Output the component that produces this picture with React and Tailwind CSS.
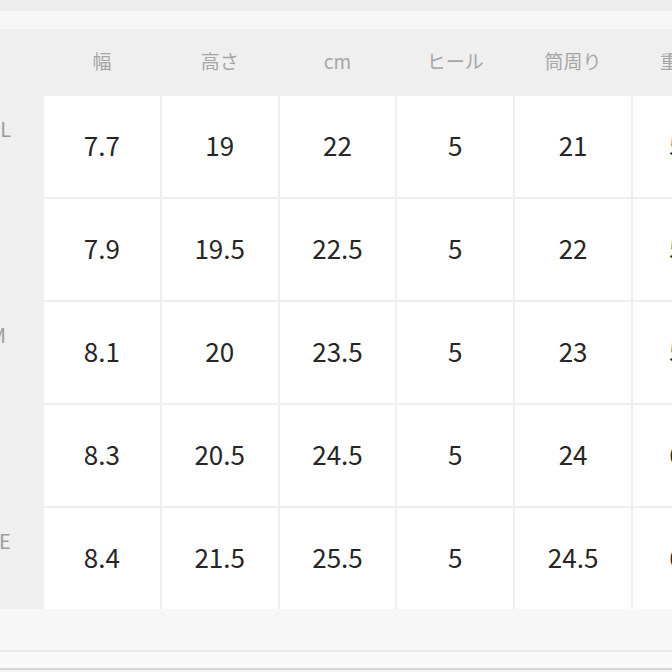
import React from "react";

const headers = ["幅", "高さ", "cm", "ヒール", "筒周り", "重さ(g)"];
const rows = [
  { label: "SMALL", sub: "22cm", v: ["7.7", "19", "22", "5", "21", "530"] },
  { label: "S/M", sub: "22.5", v: ["7.9", "19.5", "22.5", "5", "22", "550"] },
  { label: "SM/M", sub: "23.5", v: ["8.1", "20", "23.5", "5", "23", "580"] },
  { label: "M/L", sub: "24.5", v: ["8.3", "20.5", "24.5", "5", "24", "610"] },
  { label: "LARGE", sub: "25.5", v: ["8.4", "21.5", "25.5", "5", "24.5", "640"] },
];

const font = { fontFamily: '"Noto Sans CJK JP", "Noto Sans", sans-serif' };

export default function App() {
  return (
    <div
      className="w-[672px] h-[672px] overflow-hidden bg-[#f7f7f7] flex flex-col"
      style={font}
    >
      <div className="h-[11px] shrink-0 bg-[#eeeeee]" />
      <div className="h-[18px] shrink-0 bg-[#f7f7f7]" />
      <div className="ml-[-82px] w-max shrink-0 grid grid-cols-[124px_repeat(6,115.8px)] gap-[2px] bg-[#efefef]">
        <div className="h-[65px] bg-[#efefef]" />
        {headers.map((h) => (
          <div
            key={h}
            className="h-[65px] bg-[#efefef] flex items-center justify-center text-[19px] text-[#a6a6a6]"
          >
            {h}
          </div>
        ))}
        {rows.map((r) => (
          <React.Fragment key={r.label}>
            <div className="h-[101px] bg-[#efefef] flex flex-col items-center justify-center text-[#9c9c9c] leading-[26px] pb-[10px]">
              <span className="text-[20px]">{r.label}</span>
              <span className="text-[14px]">{r.sub}</span>
            </div>
            {r.v.map((x, i) => (
              <div
                key={i}
                className="h-[101px] bg-white flex items-center justify-center text-[26px] text-[#262626] pb-[5px]"
              >
                {x}
              </div>
            ))}
          </React.Fragment>
        ))}
      </div>
      <div className="h-[41px] shrink-0 bg-[#f7f7f7]" />
      <div className="h-[2px] shrink-0 bg-[#ebebeb]" />
      <div className="h-[16px] shrink-0 bg-[#f9f9f9]" />
      <div className="h-[2px] shrink-0 bg-[#d6d6d6]" />
      <div className="h-[2px] shrink-0 bg-[#f4f4f4]" />
    </div>
  );
}
